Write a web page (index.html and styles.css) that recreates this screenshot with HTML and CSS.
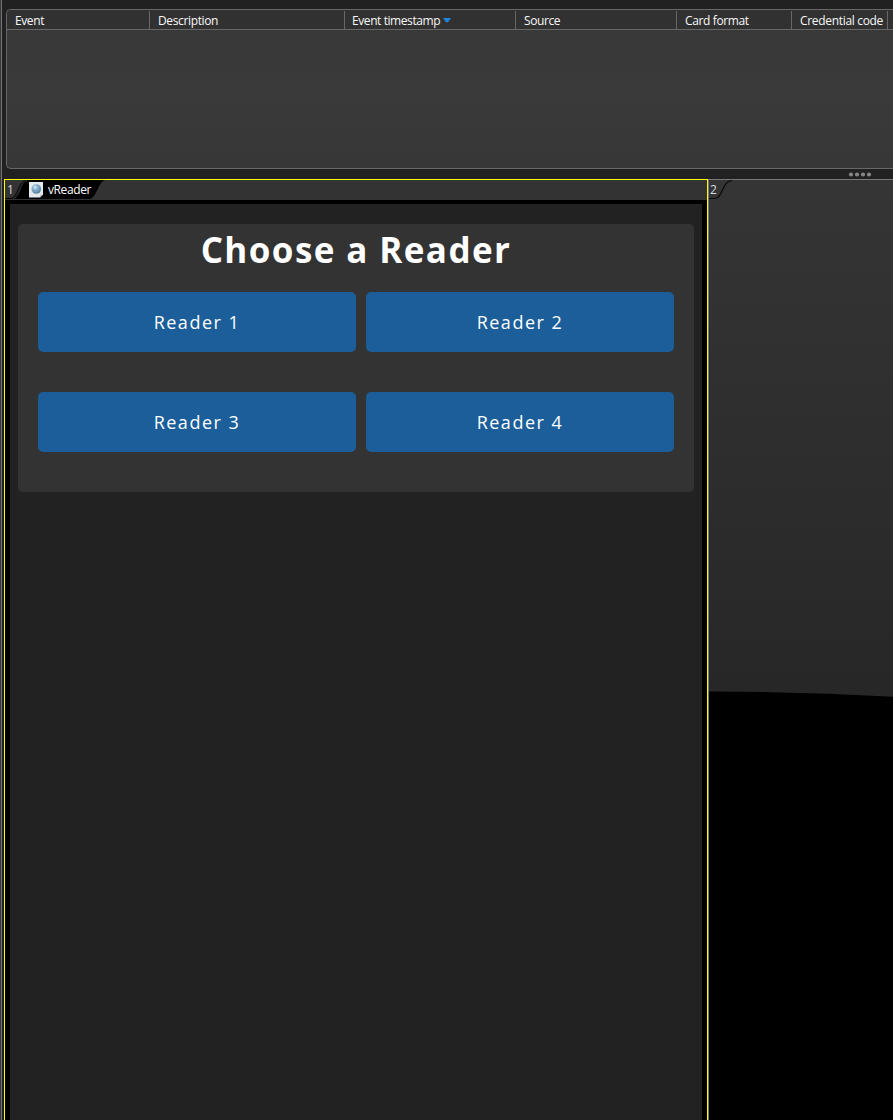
FILE: index.html
```html
<!DOCTYPE html>
<html lang="en">
<head>
<meta charset="utf-8">
<title>vReader</title>
<link rel="stylesheet" href="styles.css">
</head>
<body>
<div class="app">
  <section class="report">
    <header class="columns">
      <div class="col event"><span>Event</span></div>
      <div class="col description"><span>Description</span></div>
      <div class="col timestamp"><span>Event timestamp</span><svg class="sort" width="8" height="5" viewBox="0 0 8 5"><path d="M0 0H8L5 4.300H3Z" fill="#1e86dc"/></svg></div>
      <div class="col source"><span>Source</span></div>
      <div class="col format"><span>Card format</span></div>
      <div class="col credential"><span>Credential code</span></div>
      <div class="col rest"></div>
    </header>
  </section>
  <div class="splitter">
    <svg width="24" height="5" viewBox="0 0 24 5" fill="#858585"><circle cx="3" cy="2.500" r="2.100"/><circle cx="9" cy="2.500" r="2.100"/><circle cx="15" cy="2.500" r="2.100"/><circle cx="21" cy="2.500" r="2.100"/></svg>
  </div>
  <div class="tiles">
    <section class="tile selected">
      <div class="tabs">
        <svg class="tab-shape" width="102" height="20" viewBox="0 0 102 20">
          <path d="M6 19C15 19 14 0 23 0H101C93 0 92 19 84 19Z" fill="#000"/>
          <path d="M0 18H5C13 18 14 0 22 0H0Z" fill="#333"/>
          <path d="M0 18.500H6C13 18 13 1 21 .5" fill="none" stroke="#000"/>
          <path d="M8 18.500C15 18 15 1 22 .5" fill="none" stroke="#353535"/>
        </svg>
        <span class="number">1</span>
        <svg class="page-icon" width="14" height="16" viewBox="0 0 14 16">
          <defs><radialGradient id="globe" cx=".38" cy=".32" r=".7"><stop stop-color="#e0f0fb"/><stop offset=".35" stop-color="#8db3cf"/><stop offset="1" stop-color="#54809f"/></radialGradient></defs>
          <path d="M0 0H14V12.500L11 15.500H0Z" fill="#e4eaed"/>
          <path d="M14 12.500H11V15.500Z" fill="#b8c2c9"/>
          <circle cx="7.300" cy="7" r="4.800" fill="url(#globe)"/>
        </svg>
        <span class="title">vReader</span>
      </div>
      <main class="page">
        <div class="card">
          <h1>Choose a Reader</h1>
          <div class="readers">
            <button>Reader 1</button>
            <button>Reader 2</button>
            <button>Reader 3</button>
            <button>Reader 4</button>
          </div>
        </div>
      </main>
    </section>
    <section class="tile empty">
      <div class="empty-head">
        <span class="number">2</span>
        <svg width="24" height="20" viewBox="0 0 24 20"><path d="M0 18.500H6C14 18 13 1 23 .5" fill="none" stroke="#0b0b0b" stroke-width="1.200"/></svg>
      </div>
      <svg class="horizon" width="184" height="429" viewBox="0 0 184 429"><path d="M0 .5Q92 .7 184 5.800V429H0Z" fill="#000"/></svg>
    </section>
  </div>
</div>
</body>
</html>
```
FILE: styles.css
```css
* { box-sizing: border-box; }
body {
  margin: 0;
  background: #212121;
  color: #f8f8f8;
  font-family: "Open Sans", "Noto Sans", sans-serif;
  overflow: hidden;
}
svg { display: block; flex: none; }
.app {
  width: 893px;
  height: 1120px;
  padding: 9px 0 0 2px;
  background: linear-gradient(90deg, #383838 0 1px, #747474 1px 2px, #212121 2px);
  display: flex;
  flex-direction: column;
  overflow: hidden;
}
.report {
  height: 160px;
  margin-left: 4px;
  border: 1px solid #686868;
  border-right: 0;
  border-radius: 5px 0 0 5px;
  background: linear-gradient(#383838, #3a3a3a 50%, #373737);
  overflow: hidden;
}
.columns {
  height: 20px;
  display: flex;
  padding-top: 1px;
  border-bottom: 1px solid #686868;
  background: #313131;
}
.col {
  flex: none;
  display: flex;
  padding-left: 8px;
  border-right: 1px solid #686868;
  font-size: 12px;
  line-height: 19px;
  white-space: nowrap;
}
.col span { flex: none; }
.event { width: 143px; letter-spacing: -.4px; }
.description { width: 195px; letter-spacing: -.36px; }
.timestamp { width: 171px; padding-left: 7px; letter-spacing: -.42px; }
.source { width: 161px; letter-spacing: -.4px; }
.format { width: 115px; letter-spacing: -.37px; }
.credential { width: 96px; letter-spacing: -.32px; }
.rest { flex: 1; padding: 0; border: 0; }
.sort { margin: 7px 0 0 3px; }
.splitter {
  height: 10px;
  padding: 3px 21px 0 0;
  display: flex;
  justify-content: flex-end;
}
.tiles { height: 941px; display: flex; padding-left: 2px; }
.tile { flex: none; height: 941px; }
.selected {
  width: 704px;
  border: 1px solid #ffff00;
  border-bottom: 0;
  background: #000;
}
.tabs {
  position: relative;
  height: 20px;
  display: flex;
  background: #333;
}
.tab-shape { position: absolute; left: 0; top: 0; }
.number {
  position: relative;
  width: 24px;
  padding-left: 2px;
  color: #d5dde2;
  font-size: 12px;
  line-height: 20px;
}
.page-icon { position: relative; margin-top: 2px; }
.title {
  position: relative;
  margin-left: 5px;
  color: #fff;
  font-size: 12px;
  line-height: 20px;
  letter-spacing: -.4px;
}
.page {
  height: 916px;
  margin: 4px 5px 0;
  padding: 20px 8px;
  background: #222;
}
.card {
  height: 268px;
  padding: 5px 20px 0;
  border-radius: 5px;
  background: #333;
}
h1 {
  margin: 0;
  height: 63px;
  color: #fff;
  font-size: 35px;
  line-height: 41px;
  font-weight: 700;
  letter-spacing: 1.4px;
  text-align: center;
  white-space: nowrap;
}
.readers {
  display: grid;
  grid-template-columns: 318px 308px;
  grid-auto-rows: 60px;
  gap: 40px 10px;
}
.readers button {
  padding: 0;
  border: 0;
  border-radius: 5px;
  background: #1b5e99;
  color: #fff;
  font-family: inherit;
  font-size: 18px;
  letter-spacing: 1.5px;
}
.empty {
  width: 185px;
  border: solid #777;
  border-width: 1px 0 0 1px;
  background: linear-gradient(#353535, #272727 512px);
  display: flex;
  flex-direction: column;
  justify-content: space-between;
}
.empty-head { display: flex; }
.empty-head .number { width: 0; padding-left: 1px; }
.empty-head svg { margin-left: -1px; }
```
